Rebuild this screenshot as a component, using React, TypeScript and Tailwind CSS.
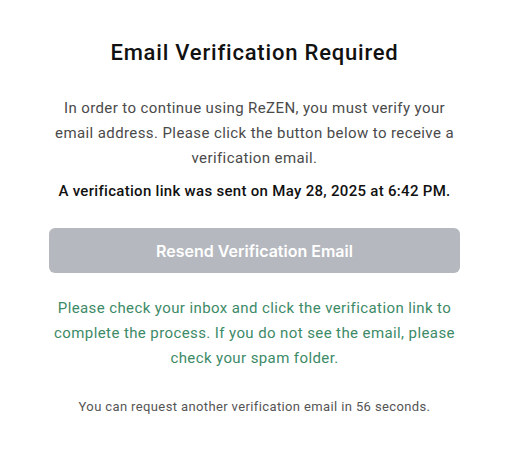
import React from 'react';

export default function App() {
  return (
    <div className="min-h-[467px] w-[526px] bg-white font-['Roboto',sans-serif]">
      <div className="ml-[49px] flex w-[411px] flex-col items-center pt-[38px] text-center">
        <h1 className="text-[22px] font-medium leading-[30px] tracking-[0.8px] text-[#111111]">
          Email Verification Required
        </h1>
        <p className="mt-[28px] w-[402px] text-[15px] leading-[25px] tracking-[0.4px] text-[#4a4a4a]">
          In order to continue using ReZEN, you must verify your email address. Please click the
          button below to receive a verification email.
        </p>
        <p className="mt-[9px] text-[15px] font-medium leading-[22px] tracking-[0.3px] text-[#111111]">
          A verification link was sent on May 28, 2025 at 6:42 PM.
        </p>
        <button
          disabled
          className="mt-[26px] h-[45px] w-full rounded-md bg-[#b5b8be] font-['Inter',sans-serif] text-[16px] font-semibold text-white"
        >
          Resend Verification Email
        </button>
        <p className="mt-[23px] w-[402px] text-[15px] leading-[25px] tracking-[0.4px] text-[#3d8a67]">
          Please check your inbox and click the verification link to complete the process. If you
          do not see the email, please check your spam folder.
        </p>
        <p className="mt-[26px] text-[13px] leading-[20px] tracking-[0.38px] text-[#555555]">
          You can request another verification email in 56 seconds.
        </p>
      </div>
    </div>
  );
}
